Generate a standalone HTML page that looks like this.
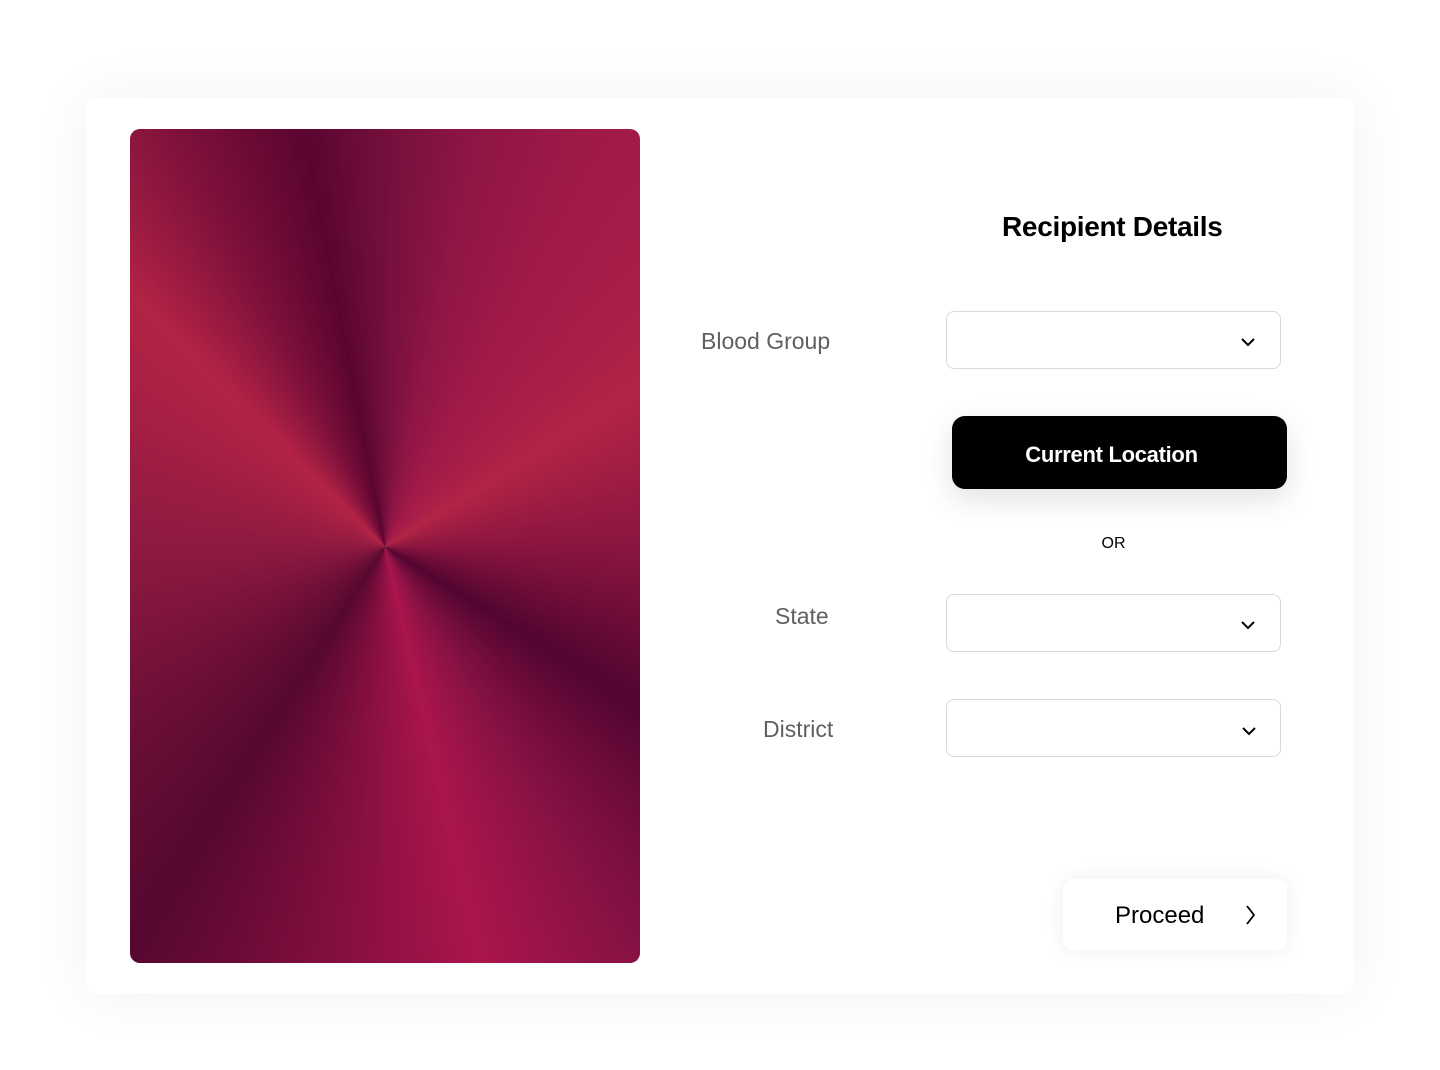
<!DOCTYPE html>
<html><head><meta charset="utf-8"><style>
*{margin:0;padding:0;box-sizing:border-box}
body{width:1440px;height:1070px;background:#fff;font-family:"Liberation Sans",sans-serif;position:relative;overflow:hidden}
.card{position:absolute;left:86px;top:98px;width:1268px;height:896px;background:#fff;border-radius:10px;box-shadow:0 0 60px rgba(0,0,0,0.06)}
.img{position:absolute;left:130px;top:129px;width:510px;height:834px;border-radius:10px;
background:conic-gradient(from 0deg at 255px 418px,#740f3d 0deg,#8e1545 12deg,#a01a48 28deg,#a81e48 45deg,#b22445 58deg,#8a1540 90deg,#520530 122deg,#8a1245 150deg,#aa154c 167deg,#7a0d3c 192deg,#560830 212deg,#8a1840 265deg,#b22345 315deg,#7a0f3a 335deg,#5a0530 349deg,#740f3d 360deg)}
.t{position:absolute;font-size:23px;color:#5f5f5f}
h1{position:absolute;left:1002px;top:211px;font-size:28px;font-weight:bold;color:#000;letter-spacing:-0.3px}
.sel{position:absolute;left:946px;width:335px;height:58px;border:1px solid #d9d9d9;border-radius:8px;background:#fff}
.sel svg{position:absolute;right:24px;top:24px}
.btn{position:absolute;left:952px;top:416px;width:335px;height:73px;background:#000;border-radius:13px;color:#fff;font-weight:bold;font-size:22px;text-align:center;line-height:78px;box-shadow:0 10px 30px rgba(0,0,0,0.12);letter-spacing:-0.3px;padding-right:16px}
.or{position:absolute;left:1093px;top:526px;width:43px;height:34px;background:#fff;font-size:16px;text-align:center;line-height:36px;color:#000;padding-right:2px}
.pro{position:absolute;left:1063px;top:879px;width:224px;height:71px;background:#fff;border-radius:10px;box-shadow:0 0 20px rgba(0,0,0,0.07);font-size:24px;color:#000}
</style></head><body>
<div class="card"></div>
<div class="img"></div>
<h1>Recipient Details</h1>
<div class="t" style="left:701px;top:328px">Blood Group</div>
<div class="sel" style="top:311px"><svg width="16" height="12" viewBox="0 0 16 12"><path d="M2 3l6 6 6-6" stroke="#000" stroke-width="2" fill="none"/></svg></div>
<div class="btn">Current Location</div>
<div class="or">OR</div>
<div class="t" style="left:775px;top:603px">State</div>
<div class="sel" style="top:594px"><svg width="16" height="12" viewBox="0 0 16 12"><path d="M2 3l6 6 6-6" stroke="#000" stroke-width="2" fill="none"/></svg></div>
<div class="t" style="left:763px;top:716px">District</div>
<div class="sel" style="top:699px"><svg width="16" height="12" viewBox="0 0 16 12" style="right:23px;top:25px"><path d="M2 3l6 6 6-6" stroke="#000" stroke-width="2" fill="none"/></svg></div>
<div class="pro"><span style="position:absolute;left:52px;top:23px">Proceed</span><svg style="position:absolute;left:182px;top:25px" width="12" height="22" viewBox="0 0 12 22"><path d="M2 2l7 9-7 9" stroke="#000" stroke-width="1.8" fill="none"/></svg></div>
</body></html>
